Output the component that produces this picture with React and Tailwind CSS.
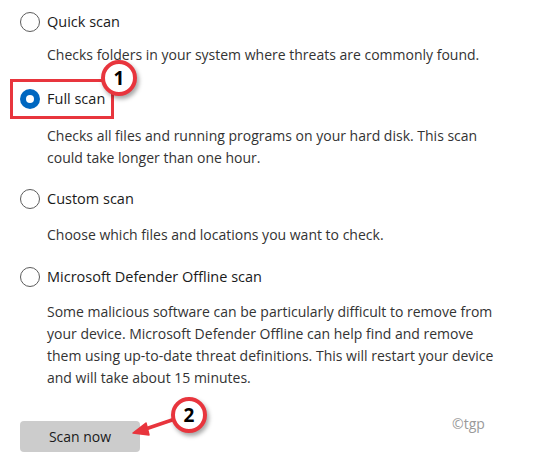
export default function App() {
  const Radio = ({ checked }) =>
    checked ? (
      <span className="w-[20px] h-[20px] rounded-full bg-[#0067c0] flex items-center justify-center shrink-0">
        <span className="w-[8px] h-[8px] rounded-full bg-white" />
      </span>
    ) : (
      <span className="w-[20px] h-[20px] rounded-full border border-[#5c5c5c] bg-white shrink-0" />
    );

  const Badge = ({ n }) => (
    <span className="w-[36px] h-[36px] rounded-full bg-white border-[4px] border-[#e8353d] shadow-[2px_3px_4px_rgba(0,0,0,0.35)] flex items-center justify-center text-[19px] font-bold text-black">
      {n}
    </span>
  );

  return (
    <div
      className="relative w-[538px] h-[466px] bg-white text-[#1a1a1a] overflow-hidden"
      style={{ fontFamily: '"Open Sans", "Noto Sans", sans-serif' }}
    >
      <div className="pl-[20px] pt-[12px] flex flex-col">
        {/* quick */}
        <div className="flex items-center gap-[7px] h-[20px]">
          <Radio />
          <span className="text-[14.5px]">Quick scan</span>
        </div>
        <p className="ml-[27px] mt-[12px] text-[14px] leading-[22px] text-[#333]">
          Checks folders in your system where threats are commonly found.
        </p>

        {/* full */}
        <div className="relative mt-[23px] flex items-center gap-[7px] h-[20px]">
          <Radio checked />
          <span className="text-[14.5px]">Full scan</span>
          <span className="absolute left-[-10px] top-[-10px] w-[104px] h-[40px] border-[3px] border-[#e8353d]" />
          <span className="absolute left-[81px] top-[-29px]">
            <Badge n="1" />
          </span>
        </div>
        <p className="ml-[27px] mt-[16px] text-[14px] leading-[22px] text-[#333] w-[460px]">
          Checks all files and running programs on your hard disk. This scan could take longer than one hour.
        </p>

        {/* custom */}
        <div className="mt-[20px] flex items-center gap-[7px] h-[20px]">
          <Radio />
          <span className="text-[14.5px]">Custom scan</span>
        </div>
        <p className="ml-[27px] mt-[15px] text-[14px] leading-[22px] text-[#333]">
          Choose which files and locations you want to check.
        </p>

        {/* offline */}
        <div className="mt-[21px] flex items-center gap-[7px] h-[20px]">
          <Radio />
          <span className="text-[14.5px]">Microsoft Defender Offline scan</span>
        </div>
        <p className="ml-[27px] mt-[14px] text-[14px] leading-[22px] text-[#333] w-[460px]">
          Some malicious software can be particularly difficult to remove from your device. Microsoft Defender Offline can help find and remove them using up-to-date threat definitions. This will restart your device and will take about 15 minutes.
        </p>

        <div className="mt-[32px] flex items-center">
          <button className="w-[120px] h-[31px] rounded-[4px] bg-[#cccccc] text-[14px] text-[#1a1a1a]">
            Scan now
          </button>
        </div>
      </div>

      <span className="absolute left-[452px] top-[413px] text-[14px] text-[#9a9a9a]">©tgp</span>

      {/* arrow to button */}
      <svg className="absolute left-0 top-0" width="538" height="466">
        <line x1="175" y1="419" x2="144" y2="429.5" stroke="#e8353d" strokeWidth="3.5" strokeLinecap="round" />
        <path d="M133,433 L146,423 L149,435 Z" fill="#e8353d" stroke="#e8353d" strokeWidth="1.5" strokeLinejoin="round" />
      </svg>
      <span className="absolute left-[171px] top-[397px]">
        <Badge n="2" />
      </span>
    </div>
  );
}
